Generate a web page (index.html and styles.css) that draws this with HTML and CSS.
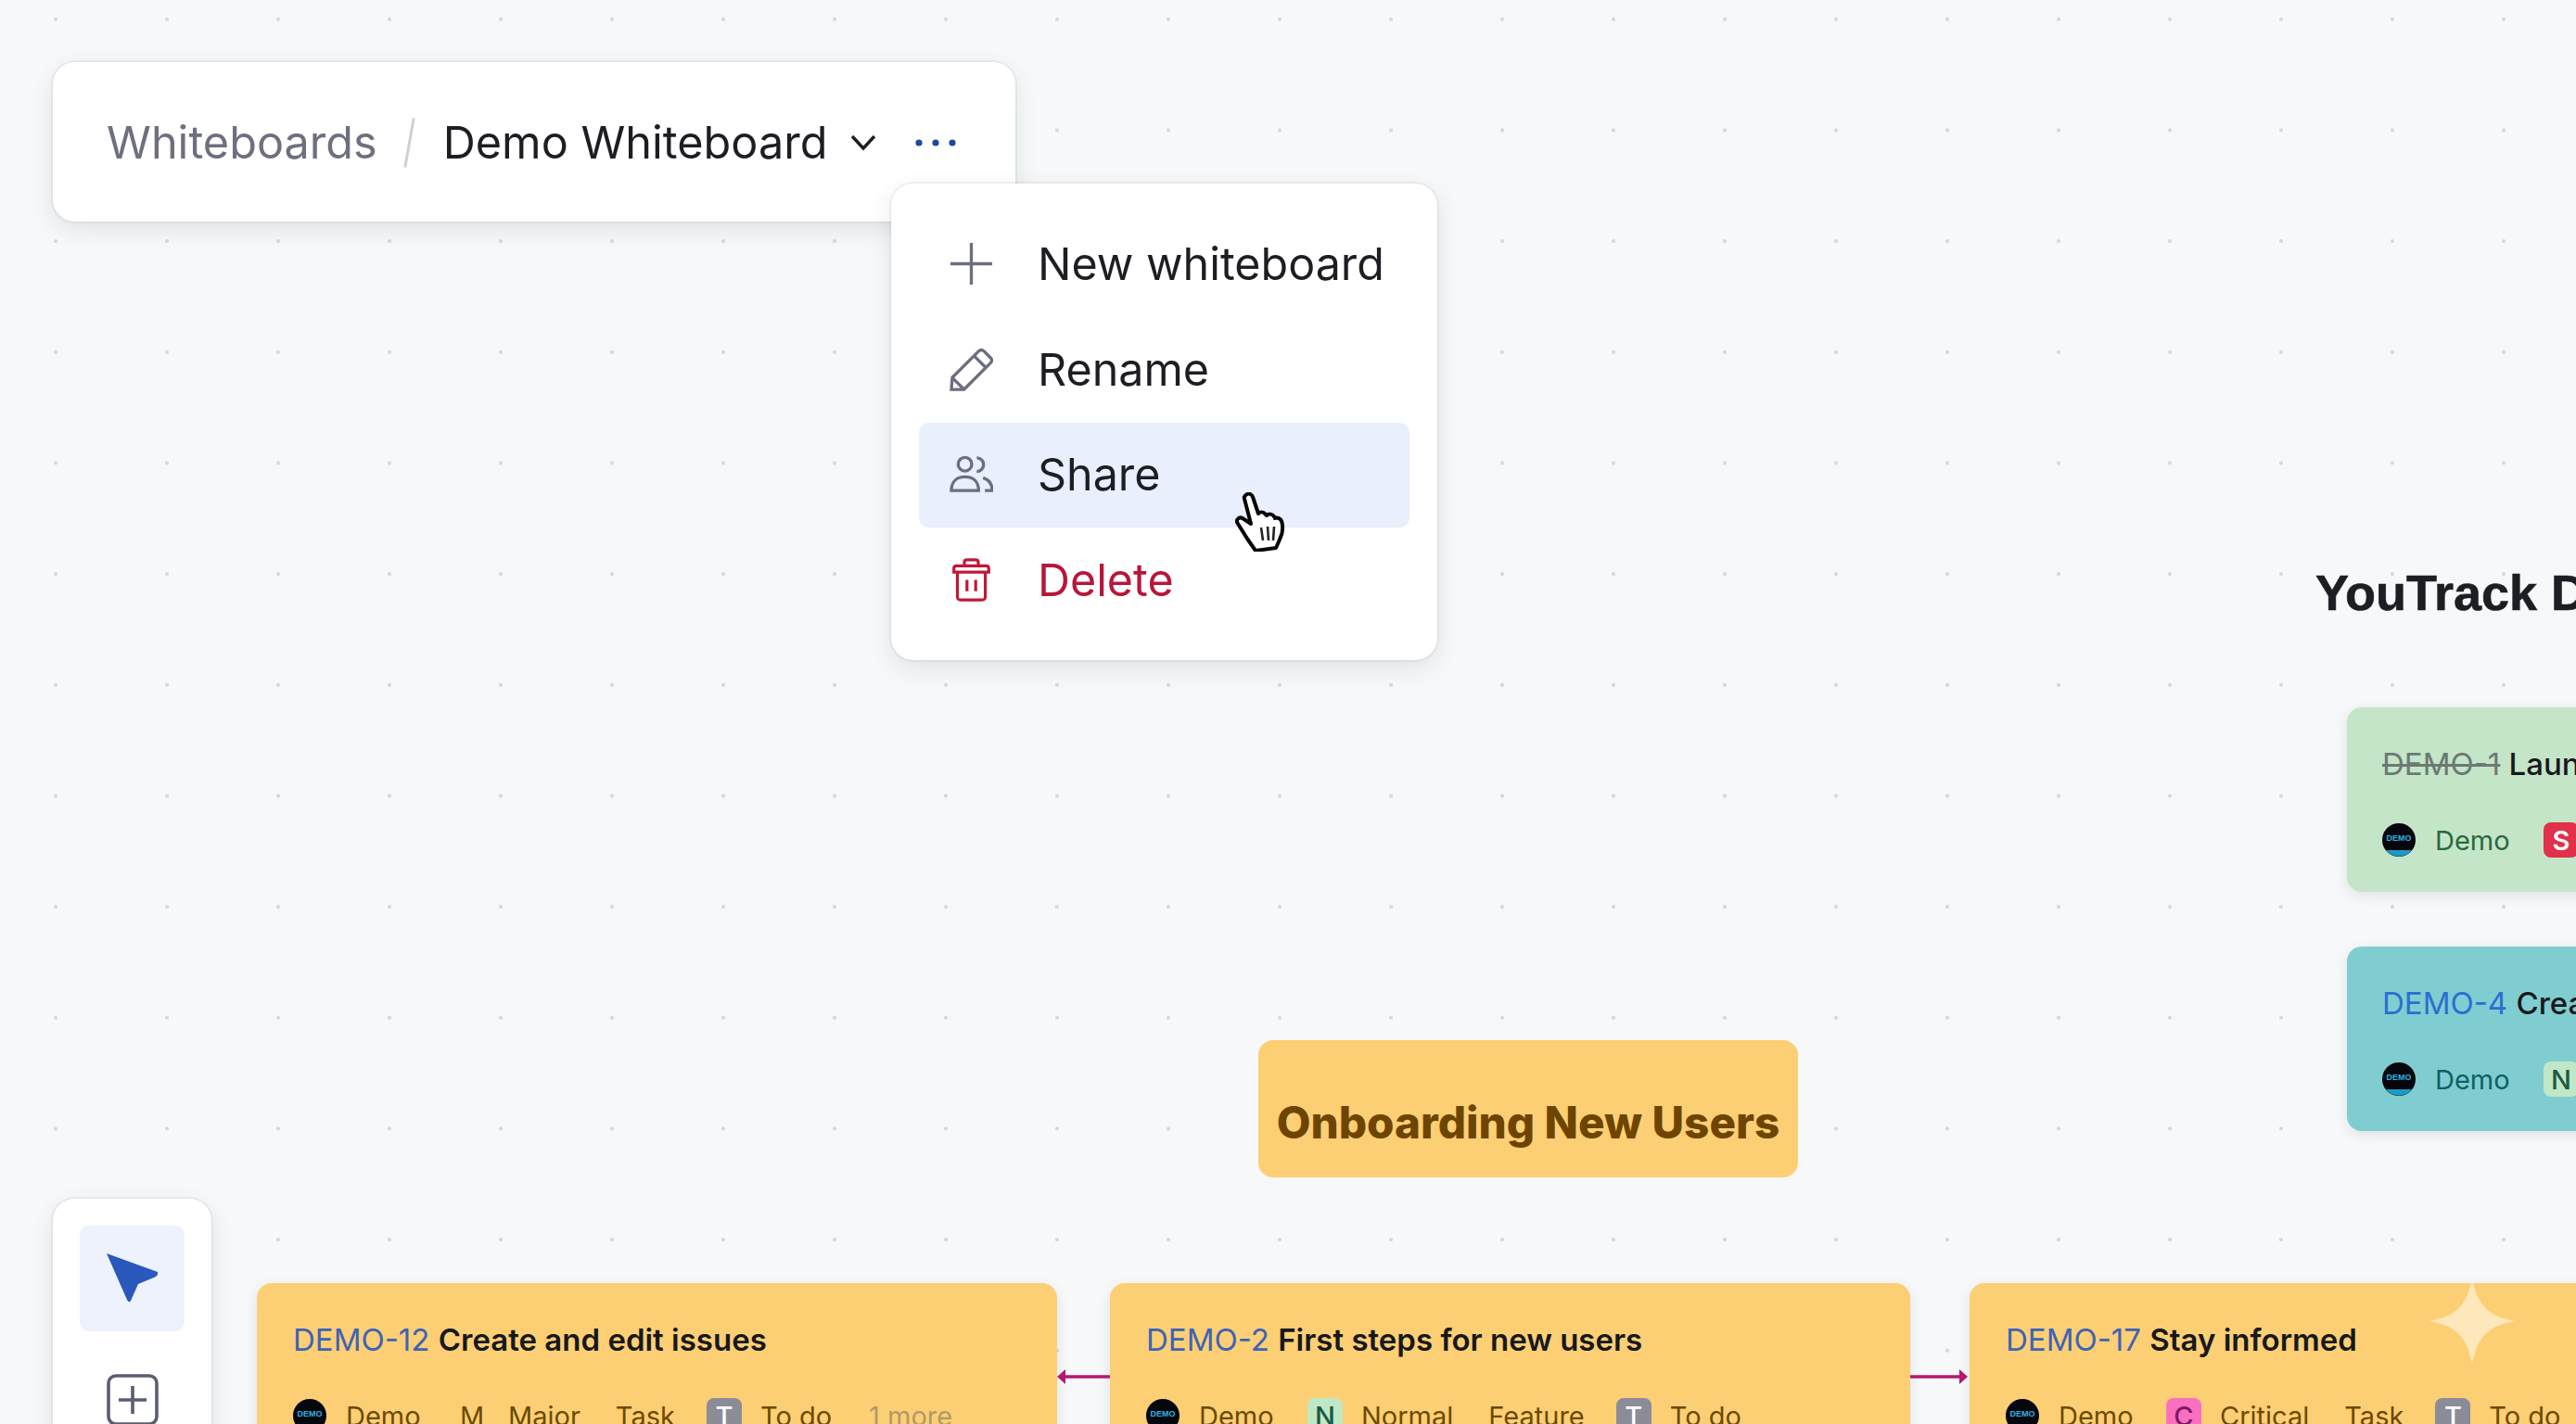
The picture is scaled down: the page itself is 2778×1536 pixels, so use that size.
FILE: index.html
```html
<!DOCTYPE html>
<html lang="en">
<head>
    <meta charset="UTF-8">
    <title>Demo Whiteboard</title>
    <link rel="stylesheet" href="styles.css">
</head>
<body>
    <div class="canvas">
        <!-- top bar -->
        <div class="topbar">
            <span class="crumb">Whiteboards</span>
            <span class="slash"></span>
            <span class="crumb-current">Demo Whiteboard</span>
            <svg class="chevron" viewBox="0 0 28 18"><path d="M2 2l12 13L26 2" fill="none" stroke="#1d1e24" stroke-width="3.4"/></svg>
            <svg class="more" viewBox="0 0 44 8"><circle cx="4" cy="4" r="3.6"/><circle cx="22" cy="4" r="3.6"/><circle cx="40" cy="4" r="3.6"/></svg>
        </div>

        <!-- menu -->
        <div class="menu">
            <div class="menu-item">
                <svg class="menu-icon" viewBox="0 0 48 48"><path d="M24 1v46M1 24h46"/></svg>
                <span>New whiteboard</span>
            </div>
            <div class="menu-item">
                <svg class="menu-icon" viewBox="0 0 48 48"><path d="M2 46l1-13L32 4c2-2 4-2 6 0l7 7c2 2 2 4 0 6L16 46zM27 9l13 13M3 33l13 13"/></svg>
                <span>Rename</span>
            </div>
            <div class="menu-item active">
                <svg class="menu-icon" viewBox="0 0 48 40"><circle cx="17" cy="9" r="7.5"/><path d="M2 38c0-10 6-15 15-15s15 5 15 15z"/><path d="M30 2a7.5 7.5 0 0 1 0 15M37 24c6 2 10 7 10 14h-8"/></svg>
                <span>Share</span>
            </div>
            <div class="menu-item danger">
                <svg class="menu-icon" viewBox="0 0 44 50"><path d="M2 12c0-2 1-3 3-3h34c2 0 3 1 3 3v4H2zM14 9V5c0-2 1-3 3-3h10c2 0 3 1 3 3v4M6 16v28c0 3 1 4 4 4h24c3 0 4-1 4-4V16M17 25v13M27 25v13"/></svg>
                <span>Delete</span>
            </div>
        </div>

        <svg class="hand" viewBox="0 0 56 64">
            <path d="M13 2c2-1 5 0 6 3l6 18c2-2 5-2 7 0l2 2c2-2 6-2 8 1l1 2c2-1 6 0 7 3 2 6 1 14-2 20l-4 9-22 3-9-13L3 34c-3-4 1-8 5-6l9 6-7-27c-1-2 1-4 3-5z" fill="#fff" stroke="#060608" stroke-width="4" stroke-linejoin="round"/>
            <path d="M28 38l2 14M35 37l1 15M42 37l-1 15" fill="none" stroke="#26262a" stroke-width="2.6"/>
        </svg>

        <!-- tools -->
        <div class="tools">
            <div class="tool active">
                <svg class="tool-arrow" viewBox="0 0 56 54"><path d="M0 0L55 20Q56 24 51 26L34 33L26 51Q24 54 22 50Z" fill="#2a58bd"/></svg>
            </div>
            <div class="tool">
                <svg class="tool-add" viewBox="0 0 56 56"><rect x="2" y="2" width="52" height="52" rx="8"/><path d="M28 13v30M13 28h30"/></svg>
            </div>
        </div>

        <!-- nodes -->
        <div class="heading">YouTrack Demo</div>
        <div class="label">Onboarding New Users</div>

        <div class="card orange card-a">
            <div class="card-title"><span class="issue-id">DEMO-12</span> <b>Create and edit issues</b></div>
            <div class="card-meta">
                <svg class="avatar" viewBox="0 0 36 36"><circle cx="18" cy="18" r="18"/><path class="avatar-band" d="M4 29h28a18 18 0 0 1-28 0z"/><text class="avatar-text" x="18" y="19">DEMO</text></svg>
                <span class="f-project">Demo</span>
                <span class="f-letter">M</span><span class="f-priority">Major</span>
                <span class="f-type">Task</span>
                <span class="badge gray">T</span><span class="f-state">To do</span>
                <span class="f-more">1 more</span>
            </div>
        </div>

        <div class="card orange card-b">
            <div class="card-title"><span class="issue-id">DEMO-2</span> <b>First steps for new users</b></div>
            <div class="card-meta">
                <svg class="avatar" viewBox="0 0 36 36"><circle cx="18" cy="18" r="18"/><path class="avatar-band" d="M4 29h28a18 18 0 0 1-28 0z"/><text class="avatar-text" x="18" y="19">DEMO</text></svg>
                <span class="f-project">Demo</span>
                <span class="badge mint">N</span><span class="f-priority">Normal</span>
                <span class="f-type">Feature</span>
                <span class="badge gray">T</span><span class="f-state">To do</span>
            </div>
        </div>

        <div class="card orange card-c">
            <div class="card-title"><span class="issue-id">DEMO-17</span> <b>Stay informed</b></div>
            <div class="card-meta">
                <svg class="avatar" viewBox="0 0 36 36"><circle cx="18" cy="18" r="18"/><path class="avatar-band" d="M4 29h28a18 18 0 0 1-28 0z"/><text class="avatar-text" x="18" y="19">DEMO</text></svg>
                <span class="f-project">Demo</span>
                <span class="badge pink">C</span><span class="f-priority">Critical</span>
                <span class="f-type">Task</span>
                <span class="badge gray">T</span><span class="f-state">To do</span>
            </div>
        </div>

        <div class="card green card-d">
            <div class="card-title"><span class="issue-id done">DEMO-1</span> <b class="plain">Launch your project</b></div>
            <div class="card-meta">
                <svg class="avatar" viewBox="0 0 36 36"><circle cx="18" cy="18" r="18"/><path class="avatar-band" d="M4 29h28a18 18 0 0 1-28 0z"/><text class="avatar-text" x="18" y="19">DEMO</text></svg>
                <span class="f-project">Demo</span>
                <span class="badge red">S</span><span class="f-priority">Show-stopper</span>
            </div>
        </div>

        <div class="card teal card-e">
            <div class="card-title"><span class="issue-id">DEMO-4</span> <b class="plain">Create a project</b></div>
            <div class="card-meta">
                <svg class="avatar" viewBox="0 0 36 36"><circle cx="18" cy="18" r="18"/><path class="avatar-band" d="M4 29h28a18 18 0 0 1-28 0z"/><text class="avatar-text" x="18" y="19">DEMO</text></svg>
                <span class="f-project">Demo</span>
                <span class="badge mint">N</span><span class="f-priority">Normal</span>
            </div>
        </div>

        <svg class="link link-left" viewBox="0 0 57 20"><path d="M8 10h49" stroke="#b5196e" stroke-width="3.5"/><path d="M0 10l9-8v16z" fill="#b5196e"/></svg>
        <svg class="link link-right" viewBox="0 0 62 20"><path d="M0 10h54" stroke="#b5196e" stroke-width="3.5"/><path d="M62 10l-9-8v16z" fill="#b5196e"/></svg>

        <svg class="sparkle" viewBox="0 0 96 96"><path d="M48 0c4 30 18 44 48 48-30 4-44 18-48 48-4-30-18-44-48-48 30-4 44-18 48-48z"/></svg>
    </div>
</body>
</html>
```

FILE: styles.css
```css
* {
    box-sizing: border-box;
}
body {
    margin: 0;
    font-family: Inter, "Liberation Sans", sans-serif;
    color: #1d1e24;
}
.canvas {
    position: relative;
    width: 2778px;
    height: 1536px;
    overflow: hidden;
    background-color: #f6f8f9;
    background-image: radial-gradient(circle, #d6d9dd 1.7px, transparent 2.4px);
    background-size: 120px 119.67px;
    background-position: 0 -39px;
}

/* top bar */
.topbar {
    position: absolute;
    left: 57px;
    top: 67px;
    width: 1038px;
    height: 172px;
    padding: 1px 0 0 58px;
    display: flex;
    align-items: center;
    background: white;
    border-radius: 24px;
    box-shadow: 0 0 0 2px rgba(30,35,60,0.05), 0 8px 26px rgba(30,35,60,0.1);
    font-size: 48.6px;
}
.crumb {
    color: #6e7080;
}
.slash {
    width: 3px;
    height: 54px;
    margin: 0 35px 0 33px;
    background: #cfd0d6;
    transform: rotate(10deg);
}
.chevron {
    width: 28px;
    height: 18px;
    margin-left: 24px;
}
.more {
    width: 44px;
    height: 8px;
    margin-left: 42px;
    fill: #1f4a9c;
}

/* menu */
.menu {
    position: absolute;
    left: 961px;
    top: 198px;
    width: 589px;
    height: 514px;
    padding: 31px 30px 28px;
    background: white;
    border-radius: 24px;
    box-shadow: 0 0 0 2px rgba(30,35,60,0.05), 0 8px 26px rgba(30,35,60,0.1);
    font-size: 48.4px;
}
.menu-item {
    height: 113.4px;
    padding: 0 0 2px 33px;
    display: flex;
    align-items: center;
    gap: 48px;
    border-radius: 10px;
}
.menu-item.active {
    background: #e9effc;
}
.menu-item.danger {
    padding-bottom: 0;
    color: #b8163a;
}
.menu-icon {
    width: 47px;
    height: 47px;
    flex-shrink: 0;
    fill: none;
    stroke: #6c6e80;
    stroke-width: 3.4;
}
.danger .menu-icon {
    stroke: #c0183a;
}
.hand {
    position: absolute;
    left: 1332px;
    top: 531px;
    width: 56px;
    height: 64px;
}

/* tools */
.tools {
    position: absolute;
    left: 57px;
    top: 1293px;
    width: 171px;
    height: 280px;
    padding: 29px;
    display: flex;
    flex-direction: column;
    align-items: center;
    gap: 46px;
    background: white;
    border-radius: 24px;
    box-shadow: 0 0 0 2px rgba(30,35,60,0.05), 0 8px 26px rgba(30,35,60,0.1);
}
.tool {
    flex-shrink: 0;
    display: flex;
    align-items: center;
    justify-content: center;
}
.tool.active {
    width: 113px;
    height: 114px;
    background: #edf2fd;
    border-radius: 10px;
}
.tool-arrow {
    width: 56px;
    height: 54px;
}
.tool-add {
    width: 56px;
    height: 56px;
    fill: none;
    stroke: #5b5e72;
    stroke-width: 3.6;
}

/* nodes */
.heading {
    position: absolute;
    left: 2497px;
    top: 607px;
    font-size: 54px;
    line-height: 64px;
    font-weight: 700;
    white-space: nowrap;
    font-family: "Liberation Sans", sans-serif;
    -webkit-text-stroke: 0.6px #1d1e24;
}
.label {
    position: absolute;
    left: 1357px;
    top: 1122px;
    width: 582px;
    height: 148px;
    padding-top: 61px;
    text-align: center;
    font-size: 47.6px;
    line-height: 56px;
    font-weight: 800;
    white-space: nowrap;
    color: #6d4500;
    background: #fdcf75;
    border-radius: 16px;
}
.card {
    position: absolute;
    height: 199px;
    padding: 43px 40px 0 39px;
    border-radius: 16px;
    box-shadow: 0 4px 14px rgba(30,35,60,0.1);
    font-size: 29px;
    white-space: nowrap;
    overflow: hidden;
}
.card.orange {
    background: #fdcf75;
    color: #6b4a00;
    top: 1384px;
    width: 863px;
}
.card.green {
    background: #c5e5c9;
    color: #2a6a3c;
}
.card.teal {
    background: #7fcdd0;
    color: #0f5f66;
}
.card-a {
    left: 277px;
}
.card-b {
    left: 1197px;
}
.card-c {
    left: 2124px;
}
.card-d {
    left: 2531px;
    top: 763px;
    width: 600px;
    padding-left: 38px;
}
.card-e {
    left: 2531px;
    top: 1021px;
    width: 600px;
    padding-left: 38px;
}
.card-title {
    height: 36px;
    font-size: 33px;
    line-height: 36px;
}
.card-title b {
    font-weight: 600;
    color: #17181c;
}
.card-title b.plain {
    font-weight: 500;
}
.issue-id {
    color: #3f63b5;
}
.teal .issue-id {
    color: #2a6fd0;
}
.issue-id.done {
    color: #6a7a72;
    text-decoration: line-through;
}
.card-meta {
    margin-top: 45px;
    height: 38px;
    display: flex;
    align-items: center;
}
.avatar {
    width: 36px;
    height: 36px;
    flex-shrink: 0;
    fill: #05070c;
}
.avatar-band {
    fill: #1b9ac4;
}
.avatar-text {
    font-family: "Liberation Sans", sans-serif;
    font-size: 9px;
    font-weight: 700;
    text-anchor: middle;
    fill: #2fb4e4;
}
.badge {
    width: 38px;
    height: 38px;
    flex-shrink: 0;
    display: flex;
    align-items: center;
    justify-content: center;
    border-radius: 8px;
    font-weight: 500;
}
.badge.gray {
    background: #8b8c98;
    color: white;
    margin-left: 34px;
}
.badge.mint {
    background: #c0e8c6;
    color: #1c5a44;
}
.badge.pink {
    background: #fb6fc0;
    color: #7a1a66;
}
.badge.red {
    background: #e0304a;
    color: white;
    font-weight: 600;
}
.f-project {
    width: 138px;
    padding-left: 21px;
    flex-shrink: 0;
}
.card-a .f-project {
    width: 144px;
}
.card-c .f-project {
    width: 137px;
}
.f-letter {
    width: 32px;
    flex-shrink: 0;
}
.f-priority {
    margin-left: 20px;
}
.f-type {
    margin-left: 38px;
}
.f-state {
    margin-left: 20px;
}
.f-more {
    margin-left: 40px;
    color: #b09a66;
}
.link {
    position: absolute;
    top: 1475px;
    height: 20px;
}
.link-left {
    left: 1140px;
    width: 57px;
}
.link-right {
    left: 2060px;
    width: 62px;
}
.sparkle {
    position: absolute;
    left: 2618px;
    top: 1377px;
    width: 96px;
    height: 96px;
    fill: rgba(255,255,255,0.5);
}
```
